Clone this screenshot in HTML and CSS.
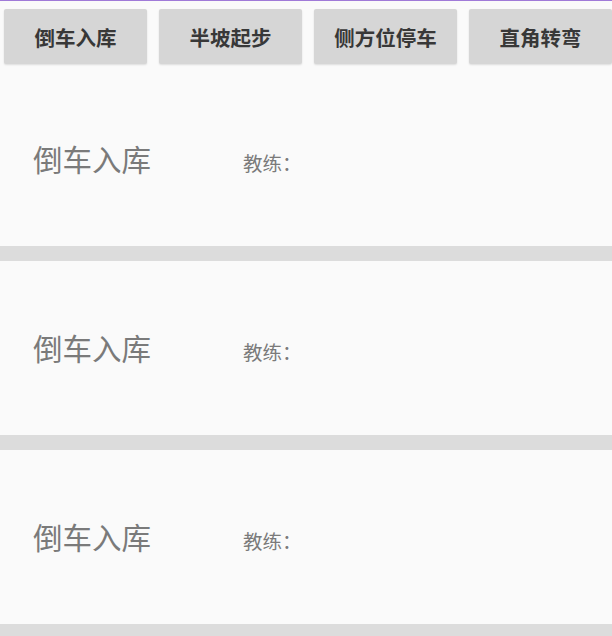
FILE: index.html
```html
<!DOCTYPE html>
<html lang="zh-CN">
<head>
<meta charset="utf-8">
<title>科目二</title>
<link rel="stylesheet" href="styles.css">
</head>
<body>
<div class="topline"></div>
<div class="tabs">
  <div class="tab">倒车入库</div>
  <div class="tab">半坡起步</div>
  <div class="tab">侧方位停车</div>
  <div class="tab">直角转弯</div>
</div>
<div class="list">
  <div class="item">
    <div class="name">倒车入库</div>
    <div class="coach">教练：</div>
  </div>
  <div class="sep"></div>
  <div class="item">
    <div class="name">倒车入库</div>
    <div class="coach">教练：</div>
  </div>
  <div class="sep"></div>
  <div class="item">
    <div class="name">倒车入库</div>
    <div class="coach">教练：</div>
  </div>
  <div class="sep"></div>
</div>
</body>
</html>
```

FILE: styles.css
```css
html, body {
  margin: 0;
  padding: 0;
  background: #fafafa;
  font-family: "Noto Sans CJK SC", "Noto Sans", sans-serif;
  overflow: hidden;
}
.topline {
  height: 1px;
  background: #a07ad8;
}
.tabs {
  display: flex;
  gap: 12px;
  padding: 8px 0 8px 4px;
  height: 55px;
}
.tab {
  flex: 1;
  background: #d6d6d6;
  border-radius: 2px;
  box-shadow: 0 1px 2px rgba(0,0,0,0.12);
  display: flex;
  align-items: center;
  justify-content: center;
  font-size: 20.5px;
  font-weight: bold;
  color: #383838;
}
.item {
  height: 174px;
  display: flex;
  align-items: baseline;
  padding-left: 33px;
  box-sizing: border-box;
  padding-top: 66px;
}
.name {
  width: 210px;
  font-size: 29.5px;
  color: #7a7a7a;
  line-height: 40px;
}
.coach {
  font-size: 19.5px;
  color: #7a7a7a;
  line-height: 30px;
}
.sep {
  height: 15px;
  background: #dcdcdc;
}
```
